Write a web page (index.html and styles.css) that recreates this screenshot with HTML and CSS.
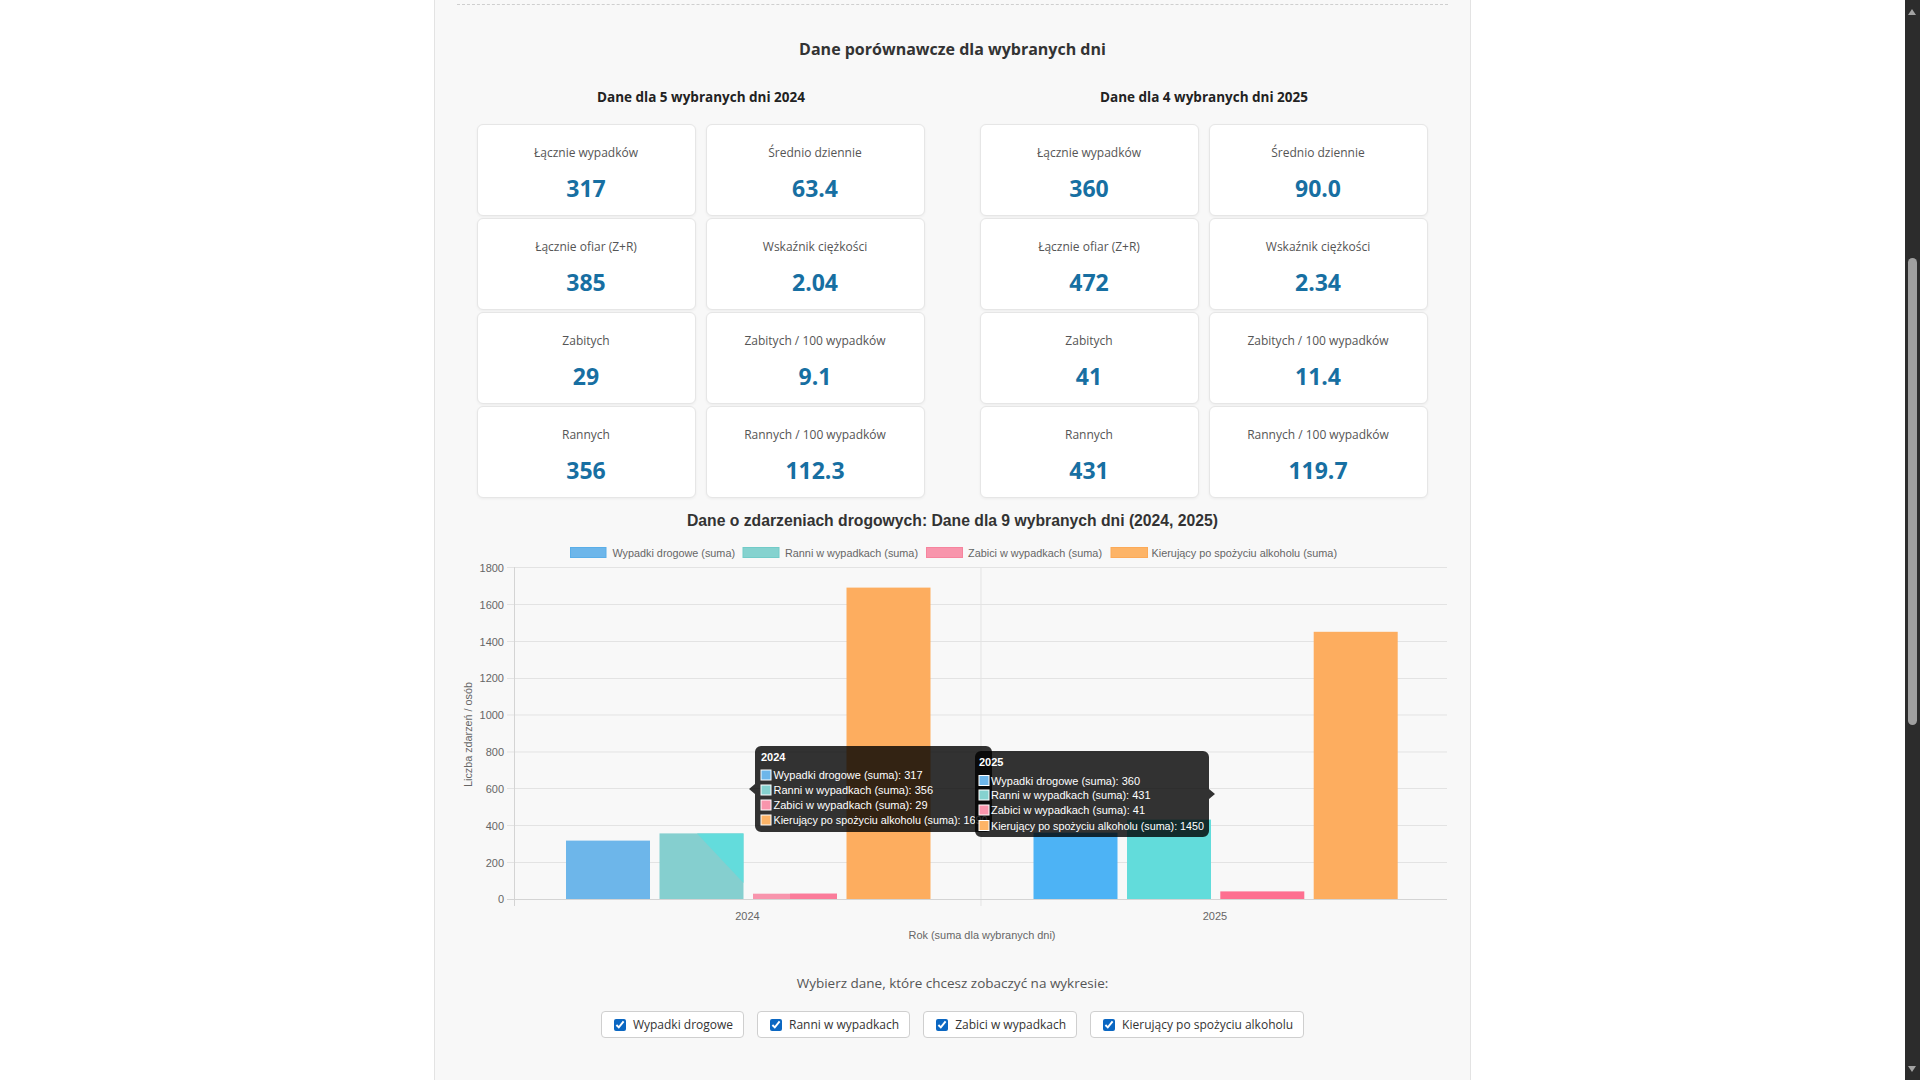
FILE: index.html
```html
<!DOCTYPE html>
<html lang="pl">
<head>
    <meta charset="UTF-8">
    <meta name="viewport" content="width=device-width, initial-scale=1.0">
    <title>Porównanie wybranych dni</title>
    <link rel="stylesheet" href="styles.css">
</head>
<body>
    <div class="container">
        <div class="prev-section"></div>

        <section class="compare">
            <h2>Dane porównawcze dla wybranych dni</h2>

            <div class="compare-grid">
                <div class="year-col">
                    <h3>Dane dla 5 wybranych dni 2024</h3>
                    <div class="cards">
                        <div class="card"><div class="card-label">Łącznie wypadków</div><div class="card-value">317</div></div>
                        <div class="card"><div class="card-label">Średnio dziennie</div><div class="card-value">63.4</div></div>
                        <div class="card"><div class="card-label">Łącznie ofiar (Z+R)</div><div class="card-value">385</div></div>
                        <div class="card"><div class="card-label">Wskaźnik ciężkości</div><div class="card-value">2.04</div></div>
                        <div class="card"><div class="card-label">Zabitych</div><div class="card-value">29</div></div>
                        <div class="card"><div class="card-label">Zabitych / 100 wypadków</div><div class="card-value">9.1</div></div>
                        <div class="card"><div class="card-label">Rannych</div><div class="card-value">356</div></div>
                        <div class="card"><div class="card-label">Rannych / 100 wypadków</div><div class="card-value">112.3</div></div>
                    </div>
                </div>

                <div class="year-col">
                    <h3>Dane dla 4 wybranych dni 2025</h3>
                    <div class="cards">
                        <div class="card"><div class="card-label">Łącznie wypadków</div><div class="card-value">360</div></div>
                        <div class="card"><div class="card-label">Średnio dziennie</div><div class="card-value">90.0</div></div>
                        <div class="card"><div class="card-label">Łącznie ofiar (Z+R)</div><div class="card-value">472</div></div>
                        <div class="card"><div class="card-label">Wskaźnik ciężkości</div><div class="card-value">2.34</div></div>
                        <div class="card"><div class="card-label">Zabitych</div><div class="card-value">41</div></div>
                        <div class="card"><div class="card-label">Zabitych / 100 wypadków</div><div class="card-value">11.4</div></div>
                        <div class="card"><div class="card-label">Rannych</div><div class="card-value">431</div></div>
                        <div class="card"><div class="card-label">Rannych / 100 wypadków</div><div class="card-value">119.7</div></div>
                    </div>
                </div>
            </div>
        </section>

        <div class="chart-box">
            <svg class="chart" width="990" height="445" viewBox="457 505 990 445">
                <text class="chart-title" x="952.5" y="526.5" text-anchor="middle" textLength="531" lengthAdjust="spacingAndGlyphs">Dane o zdarzeniach drogowych: Dane dla 9 wybranych dni (2024, 2025)</text>

                <!-- legenda -->
                <rect x="570.5" y="548.5" width="35.5" height="10" fill="#6db6ea" stroke="#5aaee8"/>
                <text class="legend-text" x="612.5" y="557.5" textLength="122.5" lengthAdjust="spacingAndGlyphs">Wypadki drogowe (suma)</text>
                <rect x="743" y="548.5" width="36" height="10" fill="#85d2cf" stroke="#72cbc8"/>
                <text class="legend-text" x="785" y="557.5" textLength="133" lengthAdjust="spacingAndGlyphs">Ranni w wypadkach (suma)</text>
                <rect x="926.5" y="548.5" width="36" height="10" fill="#f895ac" stroke="#f6849e"/>
                <text class="legend-text" x="968" y="557.5" textLength="134" lengthAdjust="spacingAndGlyphs">Zabici w wypadkach (suma)</text>
                <rect x="1111" y="548.5" width="36.5" height="10" fill="#fdb467" stroke="#fcaa58"/>
                <text class="legend-text" x="1151.5" y="557.5" textLength="185.5" lengthAdjust="spacingAndGlyphs">Kierujący po spożyciu alkoholu (suma)</text>

                <!-- siatka -->
                <g class="grid">
                    <line x1="507" y1="568.5" x2="1447.5" y2="568.5"/>
                    <line x1="507" y1="605.5" x2="1447.5" y2="605.5"/>
                    <line x1="507" y1="642.5" x2="1447.5" y2="642.5"/>
                    <line x1="507" y1="679.5" x2="1447.5" y2="679.5"/>
                    <line x1="507" y1="716" x2="1447.5" y2="716"/>
                    <line x1="507" y1="753" x2="1447.5" y2="753"/>
                    <line x1="507" y1="789.5" x2="1447.5" y2="789.5"/>
                    <line x1="507" y1="826.5" x2="1447.5" y2="826.5"/>
                    <line x1="507" y1="863.5" x2="1447.5" y2="863.5"/>
                    <line x1="981" y1="568" x2="981" y2="907"/>
                    <line x1="1447.5" y1="568" x2="1447.5" y2="907"/>
                </g>
                <g class="axis">
                    <line x1="507" y1="900.5" x2="1447.5" y2="900.5"/>
                    <line x1="514.5" y1="568" x2="514.5" y2="907"/>
                </g>

                <g class="tick-text" text-anchor="end">
                    <text x="504" y="572.5">1800</text>
                    <text x="504" y="609.5">1600</text>
                    <text x="504" y="646.5">1400</text>
                    <text x="504" y="683">1200</text>
                    <text x="504" y="720">1000</text>
                    <text x="504" y="757">800</text>
                    <text x="504" y="793.5">600</text>
                    <text x="504" y="830.5">400</text>
                    <text x="504" y="867.5">200</text>
                    <text x="504" y="904">0</text>
                </g>
                <g class="tick-text" text-anchor="middle">
                    <text x="747.5" y="920.5">2024</text>
                    <text x="1215" y="920.5">2025</text>
                </g>
                <text class="axis-title" x="982" y="939.5" text-anchor="middle" textLength="147" lengthAdjust="spacingAndGlyphs">Rok (suma dla wybranych dni)</text>
                <text class="axis-title" transform="translate(472 735.5) rotate(-90)" text-anchor="middle" textLength="105" lengthAdjust="spacingAndGlyphs">Liczba zdarzeń / osób</text>

                <!-- slupki 2024 -->
                <rect x="566" y="841.6" width="84" height="58.4" fill="#6db6ea"/>
                <rect x="659.5" y="834.4" width="84" height="65.6" fill="#85cfcf"/>
                <polygon points="697,834.4 743.5,834.4 743.5,884" fill="#63dcdc"/>
                <rect x="753" y="894.7" width="84" height="5.3" fill="#f895ad"/>
                <rect x="790" y="894.7" width="47" height="5.3" fill="#fb7c9a"/>
                <rect x="846.5" y="588.6" width="84" height="311.4" fill="#fdad5f"/>

                <!-- slupki 2025 -->
                <rect x="1033.5" y="833.7" width="84" height="66.3" fill="#4db3f5"/>
                <rect x="1127" y="820.6" width="84" height="79.4" fill="#62dcdb"/>
                <rect x="1220.3" y="892.4" width="84" height="7.6" fill="#fe6f90"/>
                <rect x="1313.7" y="632.8" width="84" height="267.2" fill="#fdad5f"/>

                <!-- tooltip 2024 -->
                <g class="tooltip">
                    <path d="M761 747h225a6 6 0 0 1 6 6v74a6 6 0 0 1-6 6h-225a6 6 0 0 1-6-6v-32l-6-5 6-5v-32a6 6 0 0 1 6-6z"/>
                    <text class="tip-title" x="761" y="762">2024</text>
                    <rect class="tip-box" x="761" y="771" width="10" height="10" fill="#6db6ea"/>
                    <text class="tip-text" x="773.5" y="780">Wypadki drogowe (suma): 317</text>
                    <rect class="tip-box" x="761" y="786" width="10" height="10" fill="#85d2cf"/>
                    <text class="tip-text" x="773.5" y="795">Ranni w wypadkach (suma): 356</text>
                    <rect class="tip-box" x="761" y="801" width="10" height="10" fill="#f895ac"/>
                    <text class="tip-text" x="773.5" y="810">Zabici w wypadkach (suma): 29</text>
                    <rect class="tip-box" x="761" y="816" width="10" height="10" fill="#fdb467"/>
                    <text class="tip-text" x="773.5" y="825" textLength="214" lengthAdjust="spacingAndGlyphs">Kierujący po spożyciu alkoholu (suma): 1690</text>
                </g>

                <!-- tooltip 2025 -->
                <g class="tooltip">
                    <path d="M981 752h222a6 6 0 0 1 6 6v32l6 5-6 5v32a6 6 0 0 1-6 6h-222a6 6 0 0 1-6-6v-74a6 6 0 0 1 6-6z"/>
                    <text class="tip-title" x="979" y="767">2025</text>
                    <rect class="tip-box" x="979" y="776.5" width="10" height="10" fill="#6db6ea"/>
                    <text class="tip-text" x="991" y="785.5">Wypadki drogowe (suma): 360</text>
                    <rect class="tip-box" x="979" y="791" width="10" height="10" fill="#85d2cf"/>
                    <text class="tip-text" x="991" y="800">Ranni w wypadkach (suma): 431</text>
                    <rect class="tip-box" x="979" y="806" width="10" height="10" fill="#f895ac"/>
                    <text class="tip-text" x="991" y="815">Zabici w wypadkach (suma): 41</text>
                    <rect class="tip-box" x="979" y="821.5" width="10" height="10" fill="#fdb467"/>
                    <text class="tip-text" x="991" y="830.5" textLength="213" lengthAdjust="spacingAndGlyphs">Kierujący po spożyciu alkoholu (suma): 1450</text>
                </g>
            </svg>
        </div>

        <div class="series-picker">
            <p>Wybierz dane, które chcesz zobaczyć na wykresie:</p>
            <div class="series-list">
                <label class="series-toggle"><input type="checkbox" checked> Wypadki drogowe</label>
                <label class="series-toggle"><input type="checkbox" checked> Ranni w wypadkach</label>
                <label class="series-toggle"><input type="checkbox" checked> Zabici w wypadkach</label>
                <label class="series-toggle"><input type="checkbox" checked> Kierujący po spożyciu alkoholu</label>
            </div>
        </div>
    </div>

    <div class="scrollbar">
        <span class="scroll-up"></span>
        <span class="scroll-thumb"></span>
        <span class="scroll-down"></span>
    </div>
</body>
</html>
```

FILE: styles.css
```css
html,
body {
    height: 100%;
}

body {
    margin: 0;
    padding-right: 15px;
    overflow: hidden;
    background-color: #fff;
    font-family: 'Open Sans', 'Noto Sans', sans-serif;
    color: #333;
}

.container {
    box-sizing: border-box;
    width: 1037px;
    min-height: 100%;
    margin: 0 auto;
    padding: 0 22px;
    background-color: #f8f8f8;
    border-left: 1px solid #e3e3e3;
    border-right: 1px solid #e3e3e3;
}

.prev-section {
    height: 4px;
    border-bottom: 1px dashed #cfcfcf;
}

.compare h2 {
    margin: 33px 0 0;
    font-size: 16px;
    line-height: 22px;
    font-weight: 700;
    text-align: center;
    color: #333;
}

.compare-grid {
    display: grid;
    grid-template-columns: 449px 449px;
    column-gap: 54px;
    justify-content: center;
    margin-top: 28px;
}

.year-col h3 {
    margin: 0 0 18px;
    font-size: 13.5px;
    line-height: 18px;
    font-weight: 700;
    text-align: center;
    color: #222;
}

.cards {
    display: grid;
    grid-template-columns: 219px 219px;
    column-gap: 10px;
    row-gap: 2px;
}

.card {
    box-sizing: border-box;
    height: 92px;
    padding-top: 19px;
    background-color: #fff;
    border: 1px solid #e6e6e6;
    border-radius: 6px;
    box-shadow: 0 1px 3px rgba(0, 0, 0, 0.05);
    text-align: center;
}

.card-label {
    font-size: 12px;
    line-height: 18px;
    color: #555;
}

.card-value {
    margin-top: 11px;
    font-size: 23px;
    line-height: 30px;
    font-weight: 700;
    color: #176fa2;
}

.chart-box {
    margin-top: 6px;
    height: 445px;
}

.chart {
    display: block;
    font-family: 'Liberation Sans', Arial, sans-serif;
}

.chart-title {
    font-size: 16px;
    font-weight: 700;
    fill: #333;
}

.legend-text {
    font-size: 11px;
    fill: #666;
}

.grid line {
    stroke: #e3e3e3;
    stroke-width: 1;
}

.axis line {
    stroke: #d4d4d4;
    stroke-width: 1;
}

.tick-text text {
    font-size: 11px;
    fill: #666;
}

.axis-title {
    font-size: 11px;
    fill: #666;
}

.tooltip path {
    fill: rgba(0, 0, 0, 0.8);
}

.tip-title {
    font-size: 11px;
    font-weight: 700;
    fill: #fff;
}

.tip-text {
    font-size: 11px;
    fill: #fff;
}

.tip-box {
    stroke: #fff;
    stroke-width: 1;
}

.series-picker {
    text-align: center;
}

.series-picker p {
    margin: 25px 0 0;
    font-size: 13.5px;
    line-height: 18px;
    color: #555;
}

.series-list {
    display: flex;
    justify-content: center;
    gap: 13px;
    margin-top: 19px;
}

.series-toggle {
    display: flex;
    align-items: center;
    gap: 7px;
    box-sizing: border-box;
    height: 27px;
    padding: 0 10px 0 12px;
    background-color: #fff;
    border: 1px solid #cfcfcf;
    border-radius: 4px;
    font-size: 12px;
    color: #333;
}

.series-toggle input {
    width: 12px;
    height: 12px;
    margin: 0;
    accent-color: #0b67c2;
}

.scrollbar {
    position: fixed;
    top: 0;
    right: 0;
    width: 15px;
    height: 100%;
    background-color: #2c2c2c;
}

.scroll-up,
.scroll-down {
    position: absolute;
    left: 3px;
    width: 0;
    height: 0;
    border-left: 4.5px solid transparent;
    border-right: 4.5px solid transparent;
}

.scroll-up {
    top: 9px;
    border-bottom: 6px solid #a3a3a3;
}

.scroll-down {
    bottom: 8px;
    border-top: 6px solid #a3a3a3;
}

.scroll-thumb {
    position: absolute;
    top: 258px;
    left: 3px;
    width: 9px;
    height: 467px;
    border-radius: 5px;
    background-color: #9f9f9f;
}
```
